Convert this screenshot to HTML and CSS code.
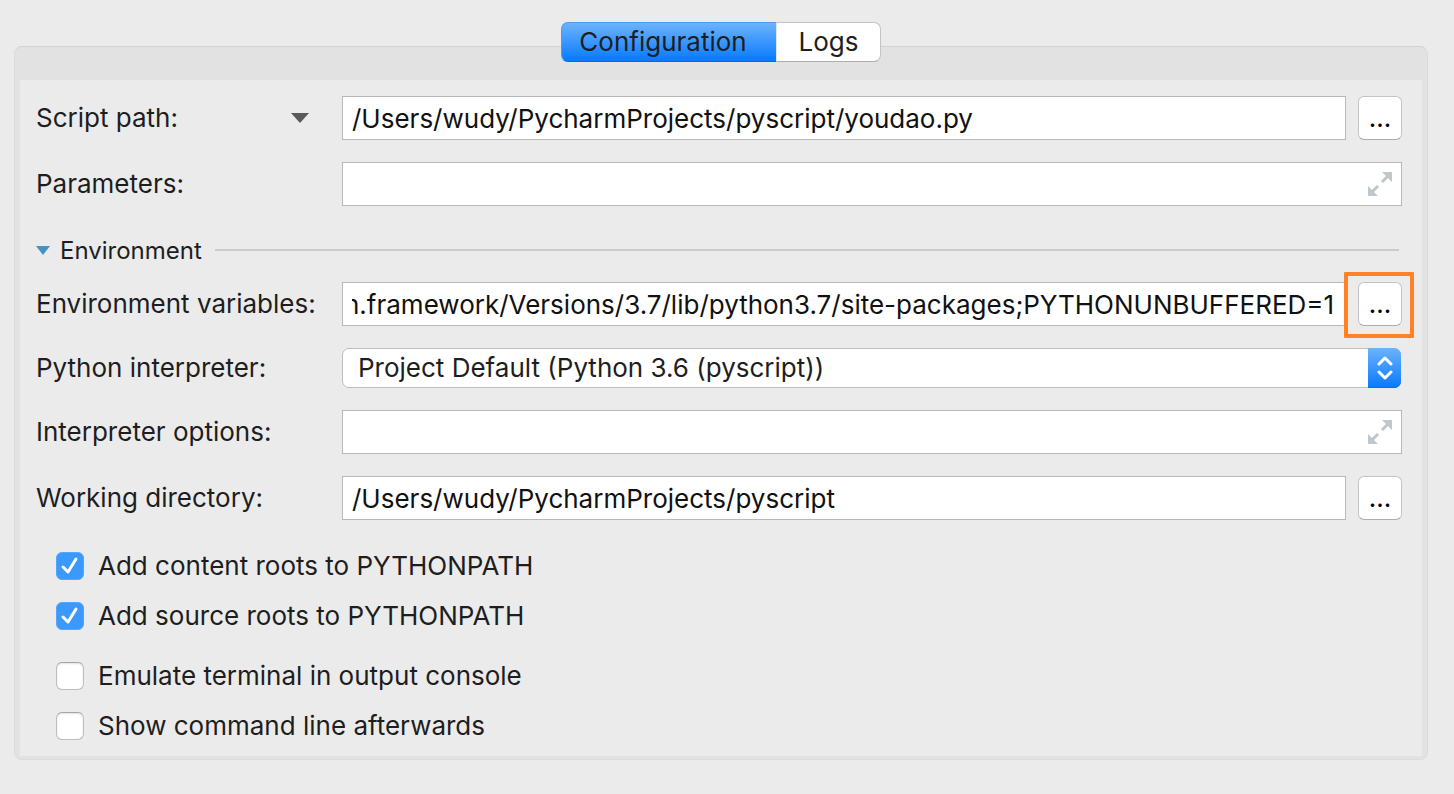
FILE: index.html
```html
<!DOCTYPE html>
<html lang="en">
<head>
<meta charset="utf-8">
<title>Run Configuration</title>
<link rel="stylesheet" href="styles.css">
</head>
<body>
<div class="tabs" role="tablist">
  <button class="tab tab-active" role="tab" aria-selected="true">Configuration</button>
  <button class="tab" role="tab" aria-selected="false">Logs</button>
</div>
<main class="panel">
  <form class="form">
    <div class="row">
      <div class="label-cell">
        <label for="script">Script path:</label>
        <button type="button" class="kind" aria-label="Choose target kind"><svg width="18" height="10" viewBox="0 0 18 10"><path d="M0 0H18L9 10Z" fill="#5a5a5a"/></svg></button>
      </div>
      <input class="field" id="script" type="text" value="/Users/wudy/PycharmProjects/pyscript/youdao.py">
      <button type="button" class="browse" aria-label="Browse script path"><span>...</span></button>
    </div>
    <div class="row">
      <label class="label-cell" for="params">Parameters:</label>
      <div class="expandable">
        <input class="field" id="params" type="text">
        <button type="button" class="expand" aria-label="Expand parameters"><svg width="24" height="24" viewBox="0 0 24 24"><path d="M14 0H24V10ZM0 14L10 24H0Z" fill="#c0c6ca"/><path d="M20 4L14 10M10 14L4 20" stroke="#c0c6ca" stroke-width="3"/></svg></button>
      </div>
    </div>
    <div class="section">
      <button type="button" class="section-toggle" aria-expanded="true"><svg width="14" height="9" viewBox="0 0 14 9"><path d="M0 0H14L7 9Z" fill="#4792c1"/></svg><span class="section-name">Environment</span></button>
      <span class="rule"></span>
    </div>
    <div class="row">
      <label class="label-cell" for="env">Environment variables:</label>
      <input class="field field-end" id="env" type="text" value="n.framework/Versions/3.7/lib/python3.7/site-packages;PYTHONUNBUFFERED=1">
      <div class="highlighted">
        <button type="button" class="browse" aria-label="Edit environment variables"><span>...</span></button>
      </div>
    </div>
    <div class="row">
      <label class="label-cell" for="interp">Python interpreter:</label>
      <div class="combo">
        <select id="interp"><option>Project Default (Python 3.6 (pyscript))</option></select>
        <span class="stepper"><svg width="16" height="24" viewBox="0 0 16 24" fill="none" stroke="#fff" stroke-width="3" stroke-linecap="round" stroke-linejoin="round"><path d="M2 8L8 2L14 8M2 16L8 22L14 16"/></svg></span>
      </div>
    </div>
    <div class="row">
      <label class="label-cell" for="opts">Interpreter options:</label>
      <div class="expandable">
        <input class="field" id="opts" type="text">
        <button type="button" class="expand" aria-label="Expand interpreter options"><svg width="24" height="24" viewBox="0 0 24 24"><path d="M14 0H24V10ZM0 14L10 24H0Z" fill="#c0c6ca"/><path d="M20 4L14 10M10 14L4 20" stroke="#c0c6ca" stroke-width="3"/></svg></button>
      </div>
    </div>
    <div class="row">
      <label class="label-cell" for="cwd">Working directory:</label>
      <input class="field" id="cwd" type="text" value="/Users/wudy/PycharmProjects/pyscript">
      <button type="button" class="browse" aria-label="Browse working directory"><span>...</span></button>
    </div>
    <div class="checks">
      <div class="check-group">
        <label class="check"><span class="box"><input type="checkbox" checked><svg viewBox="0 0 28 28"><path d="M7 15L12 20L20 7"/></svg></span>Add content roots to PYTHONPATH</label>
        <label class="check"><span class="box"><input type="checkbox" checked><svg viewBox="0 0 28 28"><path d="M7 15L12 20L20 7"/></svg></span>Add source roots to PYTHONPATH</label>
      </div>
      <div class="check-group">
        <label class="check"><span class="box"><input type="checkbox"></span>Emulate terminal in output console</label>
        <label class="check"><span class="box"><input type="checkbox"></span>Show command line afterwards</label>
      </div>
    </div>
  </form>
</main>
<script src="script.js"></script>
</body>
</html>
```
FILE: styles.css
```css
* { box-sizing: border-box; }
body {
  margin: 0;
  padding: 22px 26px 34px 14px;
  background: #ebebeb;
  color: #1e1e1e;
  font: 26px/30px Inter, "Liberation Sans", sans-serif;
}
button, input, select { font: inherit; color: inherit; margin: 0; }
button { border: 0; background: none; padding: 0; }
svg { display: block; }

.tabs {
  position: relative;
  z-index: 1;
  display: flex;
  width: max-content;
  margin: 0 auto -16px;
  height: 40px;
}
.tab {
  width: 104px;
  background: #fff;
  border: 1px solid #c4c4c4;
  border-left: 0;
  border-bottom-color: #adadad;
  border-radius: 0 7px 7px 0;
}
.tab-active {
  width: 216px;
  padding-right: 12px;
  background: linear-gradient(#6cb3fb, #067aff);
  border: 1px solid #4a9cf3;
  border-bottom-color: #0668e6;
  border-right: 1px solid #d8e6f5;
  border-radius: 7px 0 0 7px;
}

.panel {
  border: 1px solid #dcdcdc;
  border-top-color: #d2d2d2;
  border-radius: 8px;
  padding: 33px 5px 3px;
  background: #e2e2e2;
}
.form {
  display: flex;
  flex-direction: column;
  gap: 22px;
  padding: 16px 20px 16px 16px;
  background: #ebebeb;
}
.row { display: flex; align-items: center; }
.label-cell {
  display: flex;
  align-items: center;
  justify-content: space-between;
  flex: none;
  width: 306px;
  white-space: nowrap;
}
.kind { margin-right: 33px; }
.field {
  flex: 1;
  min-width: 0;
  width: 100%;
  height: 44px;
  padding: 0 9px;
  border: 1px solid #b9b9b9;
  border-radius: 0;
  background: #fff;
  color: #111;
}
.field-end { text-align: right; padding-right: 11px; }
.browse {
  flex: none;
  width: 44px;
  height: 44px;
  margin-left: 12px;
  border: 1px solid #c4c4c4;
  border-bottom-color: #acacac;
  border-radius: 6px;
  background: #fff;
  color: #000;
}
.highlighted { position: relative; }
.highlighted::after {
  content: "";
  position: absolute;
  inset: -10px -12px -12px -2px;
  border: 4px solid #ff8228;
  border-radius: 1px;
  pointer-events: none;
}
.expandable { position: relative; flex: 1; display: flex; }
.expand { position: absolute; right: 10px; top: 10px; }

.section { display: flex; align-items: center; height: 32px; gap: 13px; margin: 6px 3px -6px 0; }
.section-toggle { display: flex; align-items: center; gap: 10px; font-size: 24px; }
.section-name { padding-top: 2px; }
.rule { flex: 1; height: 2px; background: #cbcbcb; }

.combo {
  flex: 1;
  display: flex;
  position: relative;
  height: 40px;
  margin-right: 1px;
}
.combo select {
  appearance: none;
  width: 100%;
  padding: 0 48px 0 15px;
  border: 1px solid #bdbdbd;
  border-radius: 7px;
  background: #fff;
}
.stepper {
  position: absolute;
  inset: 0 0 0 auto;
  width: 33px;
  display: grid;
  place-items: center;
  border-radius: 0 7px 7px 0;
  background: linear-gradient(#6cb3fb, #067aff);
  box-shadow: inset 0 -1px #0870ee;
  pointer-events: none;
}

.checks { display: flex; flex-direction: column; gap: 32px; padding: 10px 0 0 20px; }
.check-group { display: flex; flex-direction: column; gap: 22px; }
.check { display: flex; align-items: center; gap: 14px; height: 28px; white-space: nowrap; }
.box { display: grid; width: 28px; height: 28px; }
.box > * { grid-area: 1 / 1; }
.box input {
  appearance: none;
  width: 28px;
  height: 28px;
  border: 1px solid #bdbdbd;
  border-top-color: #a5a5a5;
  border-radius: 6px;
  background: #fff;
  box-shadow: inset 0 1px 2px #e2e2e2;
}
.box input:checked { background: #3b98fc; border-color: #55a5f8; box-shadow: none; }
.box svg {
  width: 28px;
  height: 28px;
  pointer-events: none;
  fill: none;
  stroke: #fff;
  stroke-width: 3;
  stroke-linecap: round;
  stroke-linejoin: round;
}
```
FILE: script.js
```js
// Keep the tail of the long variable list in view.
const env = document.getElementById("env");
env.scrollLeft = env.scrollWidth;
```
